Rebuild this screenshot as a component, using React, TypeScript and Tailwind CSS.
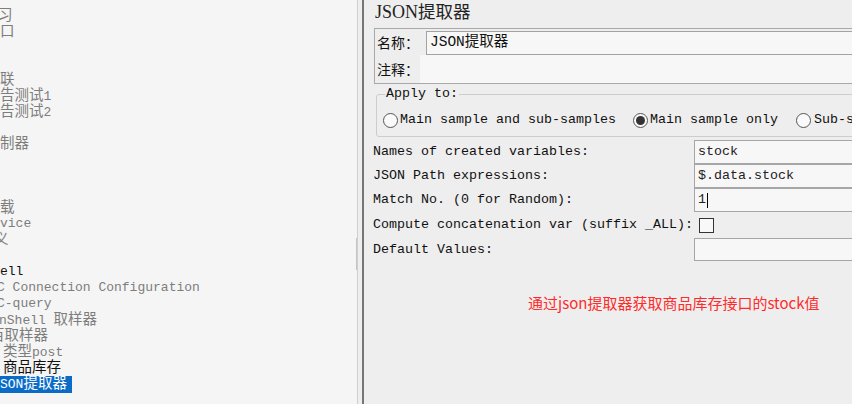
import React from "react";

const CJK = /([\u3000-\u9fff\uff00-\uffef]+)/;

// splits a string so the CJK runs can get their own (bigger) size, like SimSun next to a mono latin font
function Mixed({ text, cjk = "text-[14.5px]" }: { text: string; cjk?: string }) {
  const parts = text.split(CJK).filter(Boolean);
  return (
    <>
      {parts.map((p, i) =>
        CJK.test(p) ? (
          <span key={i} className={cjk}>
            {p}
          </span>
        ) : (
          <span key={i}>{p}</span>
        )
      )}
    </>
  );
}

type TreeRow = { text: string; tone?: "gray" | "black" | "selected"; shift?: string };

const tree: TreeRow[] = [
  { text: "习", shift: "-ml-[2px]" },
  { text: "口" },
  { text: "" },
  { text: "" },
  { text: "联" },
  { text: "告测试1" },
  { text: "告测试2" },
  { text: "" },
  { text: "制器" },
  { text: "" },
  { text: "" },
  { text: "" },
  { text: "载" },
  { text: "vice" },
  { text: "义", shift: "-ml-[6px]" },
  { text: "" },
  { text: "ell", tone: "black" },
  { text: "C Connection Configuration", shift: "-ml-[3px]" },
  { text: "C-query", shift: "-ml-[3px]" },
  { text: "nShell 取样器", shift: "-ml-[1px]" },
  { text: "百取样器", shift: "-ml-[10px]" },
  { text: "类型post", shift: "ml-[3px]" },
  { text: "商品库存", tone: "black", shift: "ml-[3px]" },
  { text: "SON提取器", tone: "selected" },
];

function Radio({ checked }: { checked?: boolean }) {
  return (
    <span className="flex h-[15px] w-[15px] shrink-0 items-center justify-center rounded-full border border-[#555] bg-[#fafafa]">
      {checked && <span className="h-[9px] w-[9px] rounded-full bg-[#333]" />}
    </span>
  );
}

function Field({ value, caret }: { value?: string; caret?: boolean }) {
  return (
    <div className="flex h-full items-center border border-[#a6a6a6] bg-[#f7f7f7] pl-[3px] text-[#222]">
      {value}
      {caret && <span className="ml-[1px] h-[15px] w-[1px] bg-black" />}
    </div>
  );
}

export default function App() {
  return (
    <div className="flex h-[404px] w-[852px] overflow-hidden bg-[#eeeeee] font-['Liberation_Mono','Noto_Sans_CJK_SC',monospace] text-[13px]">
      {/* tree, scrolled sideways so the names are cut on the left */}
      <div className="relative w-[358px] shrink-0 overflow-hidden border-r border-[#cfcfcf] bg-[#f5f5f5] pt-[8px]">
        {tree.map((r, i) => (
          <div key={i} className="flex h-4 items-center leading-4 whitespace-nowrap">
            <span
              className={`${r.shift ?? ""} ${
                r.tone === "selected"
                  ? "bg-[#0b6cc8] pr-[5px] text-white"
                  : r.tone === "black"
                  ? "text-[#111]"
                  : "text-[#7d7d7d]"
              }`}
            >
              <Mixed text={r.text} />
            </span>
          </div>
        ))}
        <div className="absolute top-[238px] right-0 h-[32px] w-[1px] bg-[#c4c4c4]" />
      </div>
      <div className="w-[4px] shrink-0" />

      <div className="w-[540px] shrink-0 border-l-2 border-[#767676] pl-[9px] text-[13.33px] text-[#111]">
        <div className="ml-[2px] h-[28px] font-['Liberation_Serif','Noto_Sans_CJK_SC',serif] text-[18px] leading-[25px] text-[#222]">
          JSON<span className="text-[17.5px]">提取器</span>
        </div>

        <div className="ml-[1px] flex h-[56px] flex-col border border-[#a9a9a9] font-['Noto_Sans_CJK_SC',sans-serif] text-[14px] whitespace-nowrap">
          <div className="flex h-[26px] items-center">
            <span className="w-[51px] shrink-0 pl-[2px]">名称：</span>
            <div className="mt-[1px] flex h-[24px] flex-1 items-center border-y border-l border-[#a3a3a3] bg-[#f7f7f7] pl-[3px] font-['Liberation_Mono','Noto_Sans_CJK_SC',monospace] text-[14.5px]">
              JSON提取器
            </div>
          </div>
          <div className="flex flex-1 items-center">
            <span className="w-[45px] shrink-0 pl-[2px]">注释：</span>
            <div className="h-full flex-1 bg-[#f7f7f7]" />
          </div>
        </div>

        <fieldset className="mt-[3px] ml-[3px] min-w-0 rounded-[3px] border border-[#cdcdcd] px-[6px] pt-[10px] pb-[7px]">
          <legend className="ml-[2px] px-[1px] leading-[14px]">Apply to:</legend>
          <div className="flex h-[18px] items-center whitespace-nowrap">
            <Radio />
            <span className="ml-[2px]">Main sample and sub-samples</span>
            <span className="ml-[17px]">
              <Radio checked />
            </span>
            <span className="ml-[2px]">Main sample only</span>
            <span className="ml-[18px]">
              <Radio />
            </span>
            <span className="ml-[3px]">Sub-samples only</span>
          </div>
        </fieldset>

        <div className="mt-[3px] grid grid-cols-[321px_1fr] grid-rows-[24px_24px_24px_26px_23px] whitespace-nowrap">
          <div className="flex items-center">Names of created variables:</div>
          <Field value="stock" />
          <div className="flex items-center">JSON Path expressions:</div>
          <Field value="$.data.stock" />
          <div className="flex items-center">Match No. (0 for Random):</div>
          <Field value="1" caret />
          <div className="flex items-center">Compute concatenation var (suffix _ALL):</div>
          <div className="flex items-center">
            <span className="ml-[5px] h-[15px] w-[15px] border border-[#333] bg-[#f8f8f8]" />
          </div>
          <div className="flex items-center">Default Values:</div>
          <Field />
        </div>

        <p className="mt-[32px] ml-[155px] font-['Noto_Sans_CJK_SC',sans-serif] text-[15px] leading-[20px] text-[#ff2b2b]">
          通过json提取器获取商品库存接口的stock值
        </p>
      </div>
    </div>
  );
}
